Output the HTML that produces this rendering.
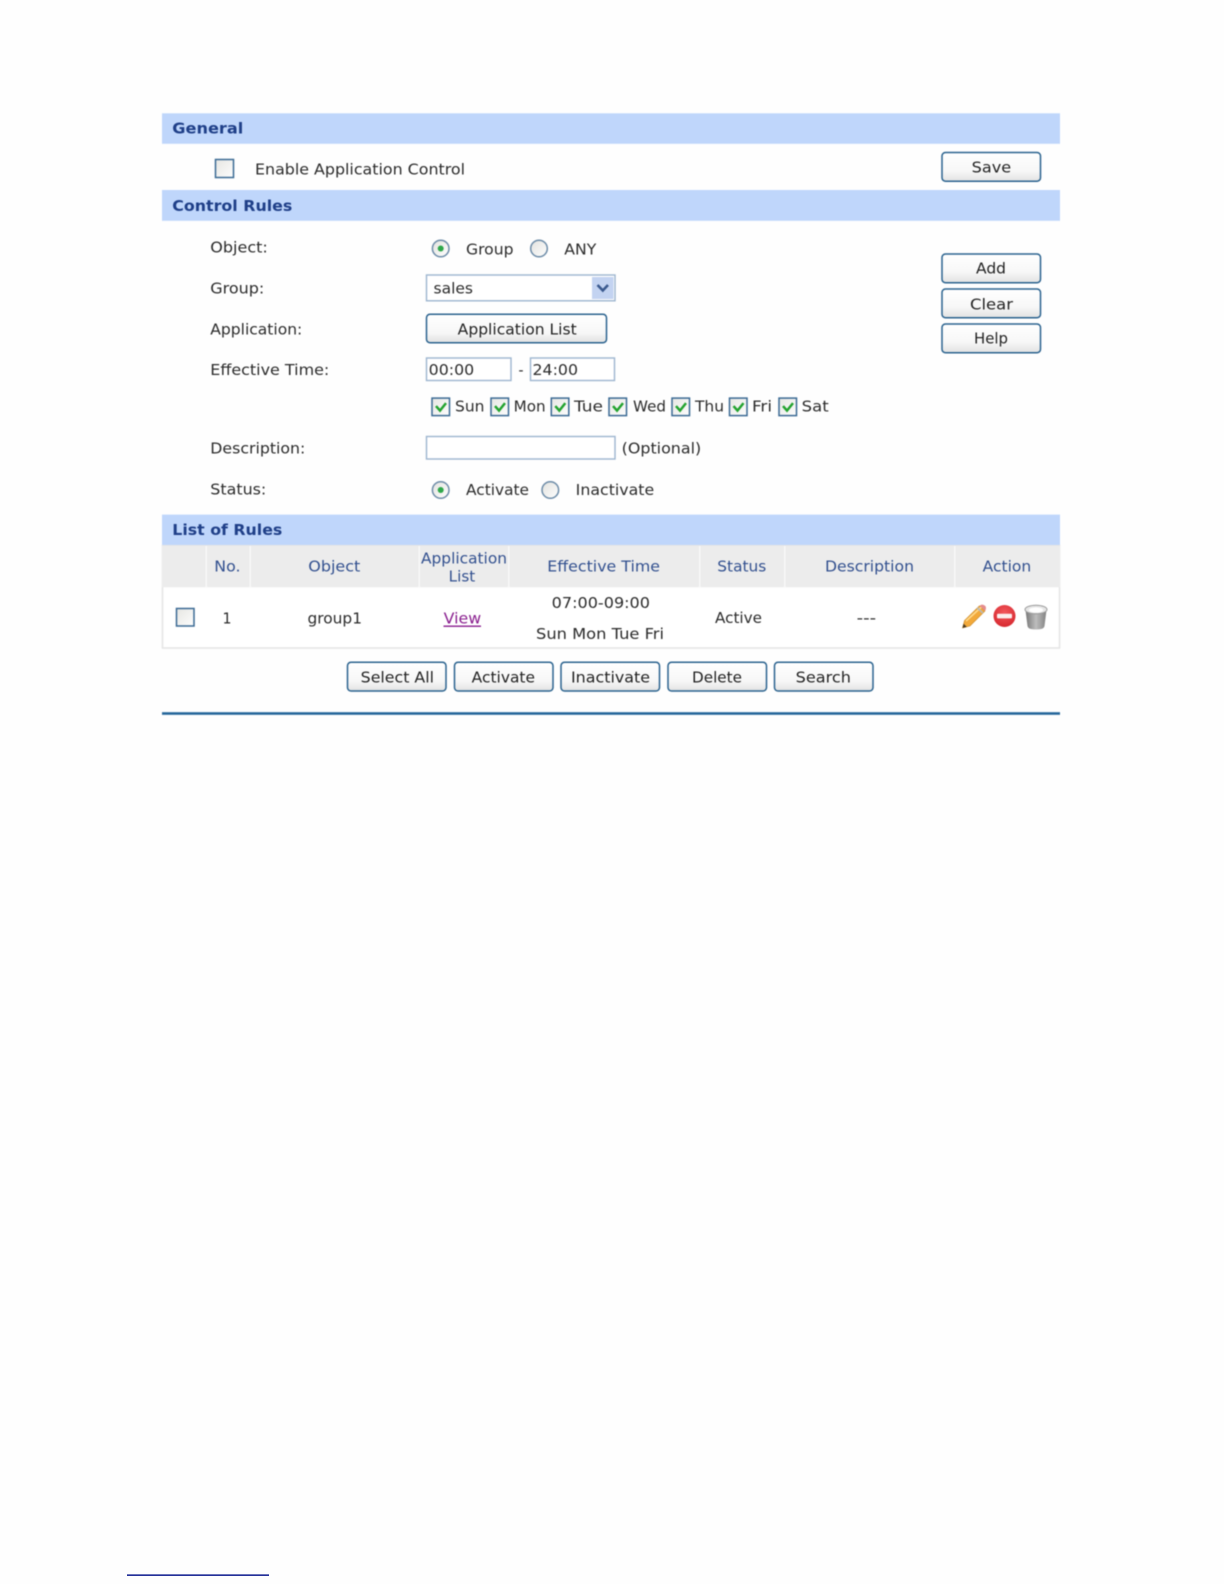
<!DOCTYPE html>
<html lang="en">
<head>
<meta charset="utf-8">
<title>Application Control</title>
<style>
html,body{margin:0;padding:0;background:#fff;width:1224px;height:1584px;overflow:hidden}
svg{display:block;position:absolute;left:0;top:0}
text{font-family:"DejaVu Sans","Liberation Sans",sans-serif;font-size:15px;fill:#2b2b2b;transform:translateY(-.7px)}
.h{font-weight:bold;fill:#1f3f88}
.t{fill:#32508f}
.bt{fill:#222}
.blur{filter:blur(.4px)}
.bar{fill:#bfd6fb}
.btn{fill:url(#bg);stroke:#2b638f;stroke-width:1.5}
.cb{fill:url(#cbg);stroke:#3b6a94;stroke-width:1.5}
.inp{fill:#fff;stroke:#9db5cf;stroke-width:1.4}
.ck{fill:none;stroke:#23a32f;stroke-width:2.5}
.rd{fill:url(#rg);stroke:#6d8ca8;stroke-width:1.5}
</style>
</head>
<body>
<svg width="1224" height="1584" viewBox="0 0 1224 1584" xmlns="http://www.w3.org/2000/svg">
<defs>
<linearGradient id="bg" x1="0" y1="0" x2="0" y2="1"><stop offset="0" stop-color="#fff"/><stop offset=".65" stop-color="#f7f7f7"/><stop offset="1" stop-color="#e2e2e2"/></linearGradient>
<linearGradient id="cbg" x1="0" y1="0" x2="1" y2="1"><stop offset="0" stop-color="#e6e6e2"/><stop offset="1" stop-color="#fdfdfd"/></linearGradient>
<linearGradient id="rg" x1="0" y1="0" x2="1" y2="1"><stop offset="0" stop-color="#e2e2de"/><stop offset="1" stop-color="#fefefe"/></linearGradient>
<linearGradient id="bin" x1="0" y1="0" x2="1" y2="0"><stop offset="0" stop-color="#777"/><stop offset=".5" stop-color="#bdbdbd"/><stop offset="1" stop-color="#828282"/></linearGradient>
<radialGradient id="red" cx=".5" cy=".35" r=".7"><stop offset="0" stop-color="#f2575c"/><stop offset="1" stop-color="#d5252c"/></radialGradient>
</defs>
<rect width="1224" height="1584" fill="#fefefe"/>
<g class="blur">
<!-- section bars -->
<rect class="bar" x="162" y="113.3" width="898" height="30.5"/>
<rect class="bar" x="162" y="190" width="898" height="30.8"/>
<rect class="bar" x="162" y="514.6" width="898" height="31.2"/>
<text class="h" x="172.3" y="134.3" textLength="71" lengthAdjust="spacingAndGlyphs">General</text>
<text class="h" x="172.3" y="211.7" textLength="120" lengthAdjust="spacingAndGlyphs">Control Rules</text>
<text class="h" x="172.3" y="535.7" textLength="110" lengthAdjust="spacingAndGlyphs">List of Rules</text>

<!-- general -->
<rect class="cb" x="215.5" y="159.5" width="18" height="18"/>
<text x="255" y="175" textLength="210" lengthAdjust="spacingAndGlyphs">Enable Application Control</text>
<rect class="btn" x="942" y="152.5" width="98.5" height="28.7" rx="3.5"/>
<text class="bt" x="971.7" y="173.3" textLength="39.5" lengthAdjust="spacingAndGlyphs">Save</text>

<!-- form labels -->
<text x="210.3" y="253.3" textLength="57.5" lengthAdjust="spacingAndGlyphs">Object:</text>
<text x="210.3" y="294" textLength="54" lengthAdjust="spacingAndGlyphs">Group:</text>
<text x="210.3" y="335" textLength="92" lengthAdjust="spacingAndGlyphs">Application:</text>
<text x="210.3" y="375.5" textLength="119" lengthAdjust="spacingAndGlyphs">Effective Time:</text>
<text x="210.3" y="454.3" textLength="95" lengthAdjust="spacingAndGlyphs">Description:</text>
<text x="210.3" y="495" textLength="56" lengthAdjust="spacingAndGlyphs">Status:</text>

<!-- object radios -->
<circle class="rd" cx="440.7" cy="248.5" r="8.3"/>
<circle cx="440.7" cy="248.5" r="3" fill="#2fa84a"/>
<text x="466" y="255" textLength="47.5" lengthAdjust="spacingAndGlyphs">Group</text>
<circle class="rd" cx="539" cy="248.5" r="8.3"/>
<text x="564.3" y="255" textLength="32" lengthAdjust="spacingAndGlyphs">ANY</text>

<!-- select -->
<rect class="inp" x="426.5" y="275" width="188.5" height="25.8"/>
<text x="433.5" y="294" textLength="39.5" lengthAdjust="spacingAndGlyphs">sales</text>
<rect x="592" y="277" width="21.5" height="22" fill="#c3d3f1"/>
<path d="M597.5 285 L602.8 290.5 L608 285" fill="none" stroke="#3b5a8f" stroke-width="2.6"/>

<!-- application list button -->
<rect class="btn" x="426.5" y="314.3" width="180" height="28.4" rx="3.5"/>
<text class="bt" x="457.7" y="335" textLength="119" lengthAdjust="spacingAndGlyphs">Application List</text>

<!-- time -->
<rect class="inp" x="426.5" y="358" width="84.5" height="22.5"/>
<text x="428.7" y="375.5" textLength="45.5" lengthAdjust="spacingAndGlyphs">00:00</text>
<text x="518.5" y="375.5" textLength="5" lengthAdjust="spacingAndGlyphs">-</text>
<rect class="inp" x="530.5" y="358" width="84" height="22.5"/>
<text x="532.5" y="375.5" textLength="45.5" lengthAdjust="spacingAndGlyphs">24:00</text>

<!-- day checkboxes -->
<g transform="translate(0,-.4)">
<rect class="cb" x="432" y="398.5" width="17.5" height="17.5"/><path class="ck" d="M436 406.5l4 4.5 6-7.5"/>
<rect class="cb" x="491" y="398.5" width="17.5" height="17.5"/><path class="ck" d="M495 406.5l4 4.5 6-7.5"/>
<rect class="cb" x="551.3" y="398.5" width="17.5" height="17.5"/><path class="ck" d="M555.3 406.5l4 4.5 6-7.5"/>
<rect class="cb" x="609" y="398.5" width="17.5" height="17.5"/><path class="ck" d="M613 406.5l4 4.5 6-7.5"/>
<rect class="cb" x="672" y="398.5" width="17.5" height="17.5"/><path class="ck" d="M676 406.5l4 4.5 6-7.5"/>
<rect class="cb" x="729.5" y="398.5" width="17.5" height="17.5"/><path class="ck" d="M733.5 406.5l4 4.5 6-7.5"/>
<rect class="cb" x="779" y="398.5" width="17.5" height="17.5"/><path class="ck" d="M783 406.5l4 4.5 6-7.5"/>
</g>
<text x="455" y="412.2" textLength="29.5" lengthAdjust="spacingAndGlyphs">Sun</text>
<text x="513.7" y="412.2" textLength="32" lengthAdjust="spacingAndGlyphs">Mon</text>
<text x="574" y="412.2" textLength="29" lengthAdjust="spacingAndGlyphs">Tue</text>
<text x="633" y="412.2" textLength="33" lengthAdjust="spacingAndGlyphs">Wed</text>
<text x="695" y="412.2" textLength="29" lengthAdjust="spacingAndGlyphs">Thu</text>
<text x="752" y="412.2" textLength="20" lengthAdjust="spacingAndGlyphs">Fri</text>
<text x="801.7" y="412.2" textLength="27" lengthAdjust="spacingAndGlyphs">Sat</text>

<!-- description -->
<rect class="inp" x="426.5" y="436.5" width="188.5" height="22.5"/>
<text x="621.7" y="454.3" textLength="79.5" lengthAdjust="spacingAndGlyphs">(Optional)</text>

<!-- status -->
<circle class="rd" cx="440.7" cy="490" r="8.3"/>
<circle cx="440.7" cy="490" r="3" fill="#2fa84a"/>
<text x="466" y="495.7" textLength="63" lengthAdjust="spacingAndGlyphs">Activate</text>
<circle class="rd" cx="550.3" cy="490" r="8.3"/>
<text x="575.7" y="495.7" textLength="78.5" lengthAdjust="spacingAndGlyphs">Inactivate</text>

<!-- side buttons -->
<rect class="btn" x="942" y="254" width="98.5" height="28.7" rx="3.5"/>
<text class="bt" x="976" y="274.3" textLength="30" lengthAdjust="spacingAndGlyphs">Add</text>
<rect class="btn" x="942" y="289" width="98.5" height="28.7" rx="3.5"/>
<text class="bt" x="970" y="310" textLength="43" lengthAdjust="spacingAndGlyphs">Clear</text>
<rect class="btn" x="942" y="324" width="98.5" height="28.7" rx="3.5"/>
<text class="bt" x="974" y="344.3" textLength="34" lengthAdjust="spacingAndGlyphs">Help</text>

<!-- table -->
<rect x="162.5" y="545.7" width="897" height="102.3" fill="#fff" stroke="#e4e4e4" stroke-width="1.5"/>
<rect x="162" y="545.8" width="898" height="41.4" fill="#ececec"/>
<g fill="#f8f8f8">
<rect x="205.5" y="546" width="1.5" height="41"/>
<rect x="249.5" y="546" width="1.5" height="41"/>
<rect x="418.5" y="546" width="1.5" height="41"/>
<rect x="508" y="546" width="1.5" height="41"/>
<rect x="699" y="546" width="1.5" height="41"/>
<rect x="784" y="546" width="1.5" height="41"/>
<rect x="954" y="546" width="1.5" height="41"/>
</g>
<text class="t" x="214.3" y="572" textLength="26.2" lengthAdjust="spacingAndGlyphs">No.</text>
<text class="t" x="308.3" y="572" textLength="52" lengthAdjust="spacingAndGlyphs">Object</text>
<text class="t" x="421" y="564" textLength="86" lengthAdjust="spacingAndGlyphs">Application</text>
<text class="t" x="448.7" y="582" textLength="26.5" lengthAdjust="spacingAndGlyphs">List</text>
<text class="t" x="547.3" y="572" textLength="112.7" lengthAdjust="spacingAndGlyphs">Effective Time</text>
<text class="t" x="717.3" y="572" textLength="49" lengthAdjust="spacingAndGlyphs">Status</text>
<text class="t" x="825" y="572" textLength="89" lengthAdjust="spacingAndGlyphs">Description</text>
<text class="t" x="982.7" y="572" textLength="48.5" lengthAdjust="spacingAndGlyphs">Action</text>

<rect class="cb" x="176.5" y="608.5" width="17.5" height="17.5"/>
<text x="222.5" y="624" textLength="9" lengthAdjust="spacingAndGlyphs">1</text>
<text x="307.5" y="624" textLength="54.5" lengthAdjust="spacingAndGlyphs">group1</text>
<text x="443.7" y="624" textLength="37.5" lengthAdjust="spacingAndGlyphs" style="fill:#8a1f8f">View</text>
<rect x="443.5" y="625.5" width="37.5" height="1.4" fill="#8a1f8f"/>
<text x="551.7" y="608.5" textLength="98.3" lengthAdjust="spacingAndGlyphs">07:00-09:00</text>
<text x="536" y="639.5" textLength="128" lengthAdjust="spacingAndGlyphs">Sun Mon Tue Fri</text>
<text x="715" y="623.6" textLength="47" lengthAdjust="spacingAndGlyphs">Active</text>
<text x="856.7" y="623.6" textLength="19.5" lengthAdjust="spacingAndGlyphs">---</text>

<!-- pencil -->
<path d="M962.5 628 L964.5 620.5 L979.5 605.8 L985 611 L970 626 Z" fill="#f2a93a" stroke="#c98a2a" stroke-width=".6"/>
<path d="M966 621 L981.5 607" stroke="#ffd98a" stroke-width="1.6" fill="none"/>
<path d="M979.5 605.8 L981.5 604.6 Q984 604.4 985.6 606.4 Q986.6 608.6 985 611 Z" fill="#e58d8d"/>
<path d="M977.4 607.8 L982.8 613" stroke="#b9b9b9" stroke-width="1.8" fill="none"/>
<path d="M962.5 628 L963.6 623.8 L966.8 626.9 Z" fill="#4a3a22"/>
<!-- stop icon -->
<circle cx="1004.5" cy="616" r="11" fill="url(#red)"/>
<rect x="997" y="613.8" width="15" height="4.6" rx="1" fill="#fbeeee"/>
<!-- bin -->
<path d="M1025.5 610 L1027.5 626 Q1028 628.5 1031 629 Q1036 630 1041 629 Q1044 628.5 1044.5 626 L1046.5 610 Z" fill="url(#bin)"/>
<ellipse cx="1036" cy="609.5" rx="11" ry="4.3" fill="#e6e6e6" stroke="#9a9a9a" stroke-width="1"/>
<ellipse cx="1036" cy="610" rx="7" ry="2.6" fill="#fff"/>

<!-- bottom buttons -->
<rect class="btn" x="347.5" y="662.3" width="98.5" height="28.7" rx="3.5"/>
<text class="bt" x="360.7" y="683.3" textLength="73.3" lengthAdjust="spacingAndGlyphs">Select All</text>
<rect class="btn" x="454.5" y="662.3" width="98.5" height="28.7" rx="3.5"/>
<text class="bt" x="471.7" y="683.3" textLength="63.3" lengthAdjust="spacingAndGlyphs">Activate</text>
<rect class="btn" x="561" y="662.3" width="98.5" height="28.7" rx="3.5"/>
<text class="bt" x="571" y="683.3" textLength="79" lengthAdjust="spacingAndGlyphs">Inactivate</text>
<rect class="btn" x="668" y="662.3" width="98.5" height="28.7" rx="3.5"/>
<text class="bt" x="692" y="683.3" textLength="50" lengthAdjust="spacingAndGlyphs">Delete</text>
<rect class="btn" x="774.5" y="662.3" width="98.5" height="28.7" rx="3.5"/>
<text class="bt" x="795.7" y="683.3" textLength="55.3" lengthAdjust="spacingAndGlyphs">Search</text>

<rect x="162" y="712.2" width="898" height="2.6" fill="#24659a"/>
</g>
<rect x="127" y="1574.4" width="142" height="1.5" fill="#0c1a8e"/>
</svg>
</body>
</html>
